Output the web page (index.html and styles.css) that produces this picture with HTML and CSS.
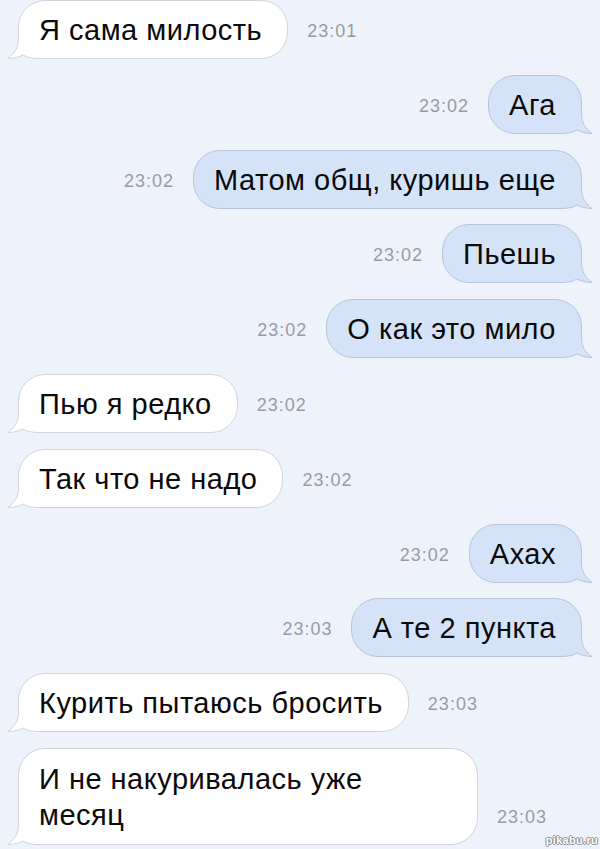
FILE: index.html
```html
<!DOCTYPE html>
<html lang="ru">
<head>
    <meta charset="UTF-8">
    <meta name="viewport" content="width=device-width, initial-scale=1.0">
    <title>Сообщения</title>
    <link rel="stylesheet" href="styles.css">
</head>
<body>
    <div class="chat">
        <div class="row in">
            <div class="bubble"><svg class="tail" viewBox="0 0 40 30"><path class="fill" d="M12 0 L12 10 C12 19 7 25 1 29.5 C7 29.5 12 28 16 26 C20 28.5 25 29.5 32 29.5 L40 29.5 L40 0 Z"/><path class="line" d="M11.5 0 L11.5 10 C11.5 19 7 25 1 29.5 C7 29.5 12 28 16 26 C20 28.5 25 29.5 32 29.5 L40 29.5"/></svg><span class="text">Я сама милость</span></div>
            <span class="time">23:01</span>
        </div>
        <div class="row out">
            <span class="time">23:02</span>
            <div class="bubble"><svg class="tail" viewBox="0 0 40 30"><path class="fill" d="M12 0 L12 10 C12 19 7 25 1 29.5 C7 29.5 12 28 16 26 C20 28.5 25 29.5 32 29.5 L40 29.5 L40 0 Z"/><path class="line" d="M11.5 0 L11.5 10 C11.5 19 7 25 1 29.5 C7 29.5 12 28 16 26 C20 28.5 25 29.5 32 29.5 L40 29.5"/></svg><span class="text">Ага</span></div>
        </div>
        <div class="row out">
            <span class="time">23:02</span>
            <div class="bubble"><svg class="tail" viewBox="0 0 40 30"><path class="fill" d="M12 0 L12 10 C12 19 7 25 1 29.5 C7 29.5 12 28 16 26 C20 28.5 25 29.5 32 29.5 L40 29.5 L40 0 Z"/><path class="line" d="M11.5 0 L11.5 10 C11.5 19 7 25 1 29.5 C7 29.5 12 28 16 26 C20 28.5 25 29.5 32 29.5 L40 29.5"/></svg><span class="text">Матом общ, куришь еще</span></div>
        </div>
        <div class="row out">
            <span class="time">23:02</span>
            <div class="bubble"><svg class="tail" viewBox="0 0 40 30"><path class="fill" d="M12 0 L12 10 C12 19 7 25 1 29.5 C7 29.5 12 28 16 26 C20 28.5 25 29.5 32 29.5 L40 29.5 L40 0 Z"/><path class="line" d="M11.5 0 L11.5 10 C11.5 19 7 25 1 29.5 C7 29.5 12 28 16 26 C20 28.5 25 29.5 32 29.5 L40 29.5"/></svg><span class="text">Пьешь</span></div>
        </div>
        <div class="row out">
            <span class="time">23:02</span>
            <div class="bubble"><svg class="tail" viewBox="0 0 40 30"><path class="fill" d="M12 0 L12 10 C12 19 7 25 1 29.5 C7 29.5 12 28 16 26 C20 28.5 25 29.5 32 29.5 L40 29.5 L40 0 Z"/><path class="line" d="M11.5 0 L11.5 10 C11.5 19 7 25 1 29.5 C7 29.5 12 28 16 26 C20 28.5 25 29.5 32 29.5 L40 29.5"/></svg><span class="text">О как это мило</span></div>
        </div>
        <div class="row in">
            <div class="bubble"><svg class="tail" viewBox="0 0 40 30"><path class="fill" d="M12 0 L12 10 C12 19 7 25 1 29.5 C7 29.5 12 28 16 26 C20 28.5 25 29.5 32 29.5 L40 29.5 L40 0 Z"/><path class="line" d="M11.5 0 L11.5 10 C11.5 19 7 25 1 29.5 C7 29.5 12 28 16 26 C20 28.5 25 29.5 32 29.5 L40 29.5"/></svg><span class="text">Пью я редко</span></div>
            <span class="time">23:02</span>
        </div>
        <div class="row in">
            <div class="bubble"><svg class="tail" viewBox="0 0 40 30"><path class="fill" d="M12 0 L12 10 C12 19 7 25 1 29.5 C7 29.5 12 28 16 26 C20 28.5 25 29.5 32 29.5 L40 29.5 L40 0 Z"/><path class="line" d="M11.5 0 L11.5 10 C11.5 19 7 25 1 29.5 C7 29.5 12 28 16 26 C20 28.5 25 29.5 32 29.5 L40 29.5"/></svg><span class="text">Так что не надо</span></div>
            <span class="time">23:02</span>
        </div>
        <div class="row out">
            <span class="time">23:02</span>
            <div class="bubble"><svg class="tail" viewBox="0 0 40 30"><path class="fill" d="M12 0 L12 10 C12 19 7 25 1 29.5 C7 29.5 12 28 16 26 C20 28.5 25 29.5 32 29.5 L40 29.5 L40 0 Z"/><path class="line" d="M11.5 0 L11.5 10 C11.5 19 7 25 1 29.5 C7 29.5 12 28 16 26 C20 28.5 25 29.5 32 29.5 L40 29.5"/></svg><span class="text">Ахах</span></div>
        </div>
        <div class="row out">
            <span class="time">23:03</span>
            <div class="bubble"><svg class="tail" viewBox="0 0 40 30"><path class="fill" d="M12 0 L12 10 C12 19 7 25 1 29.5 C7 29.5 12 28 16 26 C20 28.5 25 29.5 32 29.5 L40 29.5 L40 0 Z"/><path class="line" d="M11.5 0 L11.5 10 C11.5 19 7 25 1 29.5 C7 29.5 12 28 16 26 C20 28.5 25 29.5 32 29.5 L40 29.5"/></svg><span class="text">А те 2 пункта</span></div>
        </div>
        <div class="row in">
            <div class="bubble"><svg class="tail" viewBox="0 0 40 30"><path class="fill" d="M12 0 L12 10 C12 19 7 25 1 29.5 C7 29.5 12 28 16 26 C20 28.5 25 29.5 32 29.5 L40 29.5 L40 0 Z"/><path class="line" d="M11.5 0 L11.5 10 C11.5 19 7 25 1 29.5 C7 29.5 12 28 16 26 C20 28.5 25 29.5 32 29.5 L40 29.5"/></svg><span class="text">Курить пытаюсь бросить</span></div>
            <span class="time">23:03</span>
        </div>
        <div class="row in">
            <div class="bubble long"><svg class="tail" viewBox="0 0 40 30"><path class="fill" d="M12 0 L12 10 C12 19 7 25 1 29.5 C7 29.5 12 28 16 26 C20 28.5 25 29.5 32 29.5 L40 29.5 L40 0 Z"/><path class="line" d="M11.5 0 L11.5 10 C11.5 19 7 25 1 29.5 C7 29.5 12 28 16 26 C20 28.5 25 29.5 32 29.5 L40 29.5"/></svg><span class="text">И не накуривалась уже<br>месяц</span></div>
            <span class="time">23:03</span>
        </div>
    </div>
    <div class="watermark">pikabu.ru</div>
</body>
</html>
```

FILE: styles.css
```css
body {
    margin: 0;
    background-color: #eef2fb;
    font-family: "Liberation Sans", Arial, sans-serif;
    height: 849px;
    overflow: hidden;
    position: relative;
}
.chat {
    display: flex;
    flex-direction: column;
    gap: 15.8px;
    padding: 0 18px;
}
.row {
    display: flex;
    align-items: flex-end;
    gap: 19px;
}
.row.out {
    justify-content: flex-end;
}
.bubble {
    position: relative;
    box-sizing: border-box;
    padding: 11px 25px 10px 20px;
    font-size: 29px;
    line-height: 36px;
    letter-spacing: 0.5px;
    color: #0a0a0a;
    border-radius: 27px;
    border: 1px solid #d0d4db;
    background-color: #fff;
    white-space: nowrap;
}
.out .bubble {
    background-color: #d5e3f9;
    border-color: #b7c5dc;
}
.bubble .text {
    position: relative;
}
.bubble.long {
    width: 460px;
    padding-top: 12px;
    padding-bottom: 11px;
}
.tail {
    position: absolute;
    left: -12px;
    bottom: -1px;
    width: 40px;
    height: 30px;
    overflow: visible;
}
.out .tail {
    left: auto;
    right: -12px;
    transform: scaleX(-1);
}
.tail .fill {
    fill: #fff;
}
.tail .line {
    fill: none;
    stroke: #d0d4db;
    stroke-width: 1;
}
.out .tail .fill {
    fill: #d5e3f9;
}
.out .tail .line {
    stroke: #b7c5dc;
}
.time {
    font-size: 18px;
    line-height: 20px;
    letter-spacing: 1px;
    color: #979ca4;
    margin-bottom: 18px;
}
.watermark {
    position: absolute;
    right: 2px;
    bottom: 3px;
    font-size: 11px;
    font-weight: bold;
    color: #fff;
    letter-spacing: 0.3px;
    text-shadow: 1px 0 0 #8a8d93, -1px 0 0 #8a8d93, 0 1px 0 #8a8d93, 0 -1px 0 #8a8d93;
}
```
